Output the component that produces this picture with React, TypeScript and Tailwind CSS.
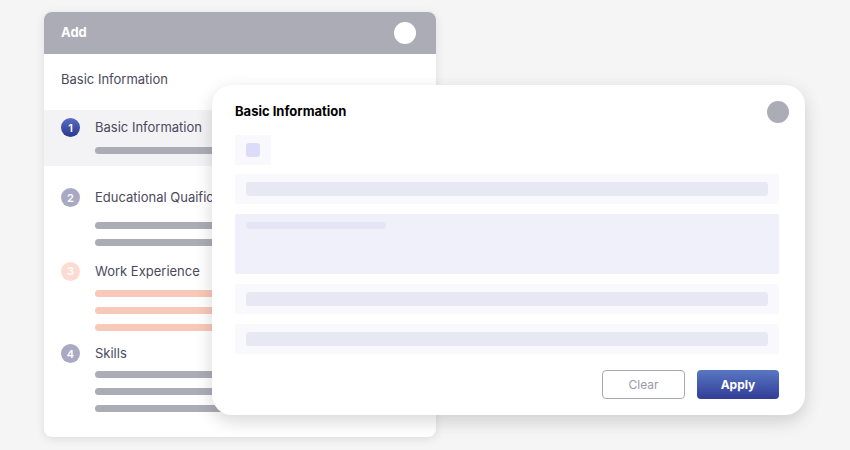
import React from "react";

const font = { fontFamily: "Inter, 'Open Sans', Arial, sans-serif" };

function Step({
  n,
  title,
  bars,
  circle,
  bar,
  className = "",
  barTop,
}: {
  n: number;
  title: string;
  bars: number;
  circle: string;
  bar: string;
  className?: string;
  barTop: string;
}) {
  return (
    <div className={className}>
      <div className="flex items-center gap-[15px]">
        <span
          className={`flex h-[19px] w-[19px] items-center justify-center rounded-full text-[11px] font-semibold text-white ${circle}`}
        >
          {n}
        </span>
        <span className="text-[13px] text-[#4a4a5c]">{title}</span>
      </div>
      <div className={`flex flex-col gap-[10px] pl-[34px] ${barTop}`}>
        {Array.from({ length: bars }).map((_, i) => (
          <div key={i} className={`h-[7px] w-[300px] rounded-full ${bar}`} />
        ))}
      </div>
    </div>
  );
}

function Field({ tall = false }: { tall?: boolean }) {
  if (tall) {
    return (
      <div className="h-[60px] rounded-[2px] bg-[#f0f0fb] px-[11px] pt-[8px]">
        <div className="h-[7px] w-[140px] rounded-full bg-[#e4e4f5]" />
      </div>
    );
  }
  return (
    <div className="flex h-[30px] items-center rounded-[2px] bg-[#f9f9fd] px-[11px]">
      <div className="h-[14px] w-full rounded-[3px] bg-[#e8e8f4]" />
    </div>
  );
}

export default function App() {
  return (
    <div className="relative h-[450px] w-[850px] overflow-hidden bg-[#f5f5f6]" style={font}>
      <div className="ml-[44px] pt-[12px]">
        <div className="h-[425px] w-[392px] overflow-hidden rounded-[8px] bg-white shadow-[0_2px_10px_rgba(0,0,0,0.10)]">
          <div className="flex h-[42px] items-center justify-between bg-[#acacb7] pl-[17px] pr-[20px]">
            <span className="text-[13px] font-bold text-white">Add</span>
            <span className="h-[22px] w-[22px] rounded-full bg-white" />
          </div>
          <div className="flex h-[56px] items-center pb-[4px] pl-[17px] text-[13px] text-[#4a4a5c]">Basic Information</div>
          <div className="h-[56px] bg-[#f3f3f5] pl-[17px] pt-[8px]">
            <Step
              n={1}
              title="Basic Information"
              bars={1}
              circle="bg-gradient-to-b from-[#5b6cc4] to-[#2a3790]"
              bar="bg-[#acacb7]"
              barTop="mt-[9px]"
            />
          </div>
          <div className="pl-[17px]">
            <Step
              n={2}
              title="Educational Quaification"
              bars={2}
              circle="bg-[#a9a9c4]"
              bar="bg-[#acacb7]"
              className="mt-[22px]"
              barTop="mt-[14px]"
            />
            <Step
              n={3}
              title="Work Experience"
              bars={3}
              circle="bg-[#fcdcd2]"
              bar="bg-[#f8c8b8]"
              className="mt-[16px]"
              barTop="mt-[9px]"
            />
            <Step
              n={4}
              title="Skills"
              bars={3}
              circle="bg-[#a9a9c4]"
              bar="bg-[#acacb7]"
              className="mt-[13px]"
              barTop="mt-[7px]"
            />
          </div>
        </div>
      </div>

      <div className="absolute left-[212px] top-[85px] w-[593px] rounded-[20px] bg-white pl-[23px] pr-[26px] pt-[16px] shadow-[0_6px_18px_rgba(0,0,0,0.16)]">
        <div className="flex items-center justify-between">
          <span className="text-[13px] font-bold text-black">Basic Information</span>
          <span className="mr-[-10px] h-[22px] w-[22px] rounded-full bg-[#acacb7]" />
        </div>
        <div className="mt-[12px] flex h-[30px] w-[36px] items-center justify-center bg-[#f9f9fd]">
          <div className="h-[14px] w-[14px] rounded-[3px] bg-[#dcdcf8]" />
        </div>
        <div className="mt-[9px] flex flex-col gap-[10px]">
          <Field />
          <Field tall />
          <Field />
          <Field />
        </div>
        <div className="mt-[16px] flex justify-end gap-[12px] pb-[16px]">
          <button className="h-[29px] w-[83px] rounded-[4px] border border-[#a9a9b4] bg-white text-[12px] text-[#9a9aa8]">
            Clear
          </button>
          <button className="h-[29px] w-[82px] rounded-[4px] bg-gradient-to-b from-[#5a77c2] to-[#323c97] text-[12px] font-bold text-white">
            Apply
          </button>
        </div>
      </div>
    </div>
  );
}
